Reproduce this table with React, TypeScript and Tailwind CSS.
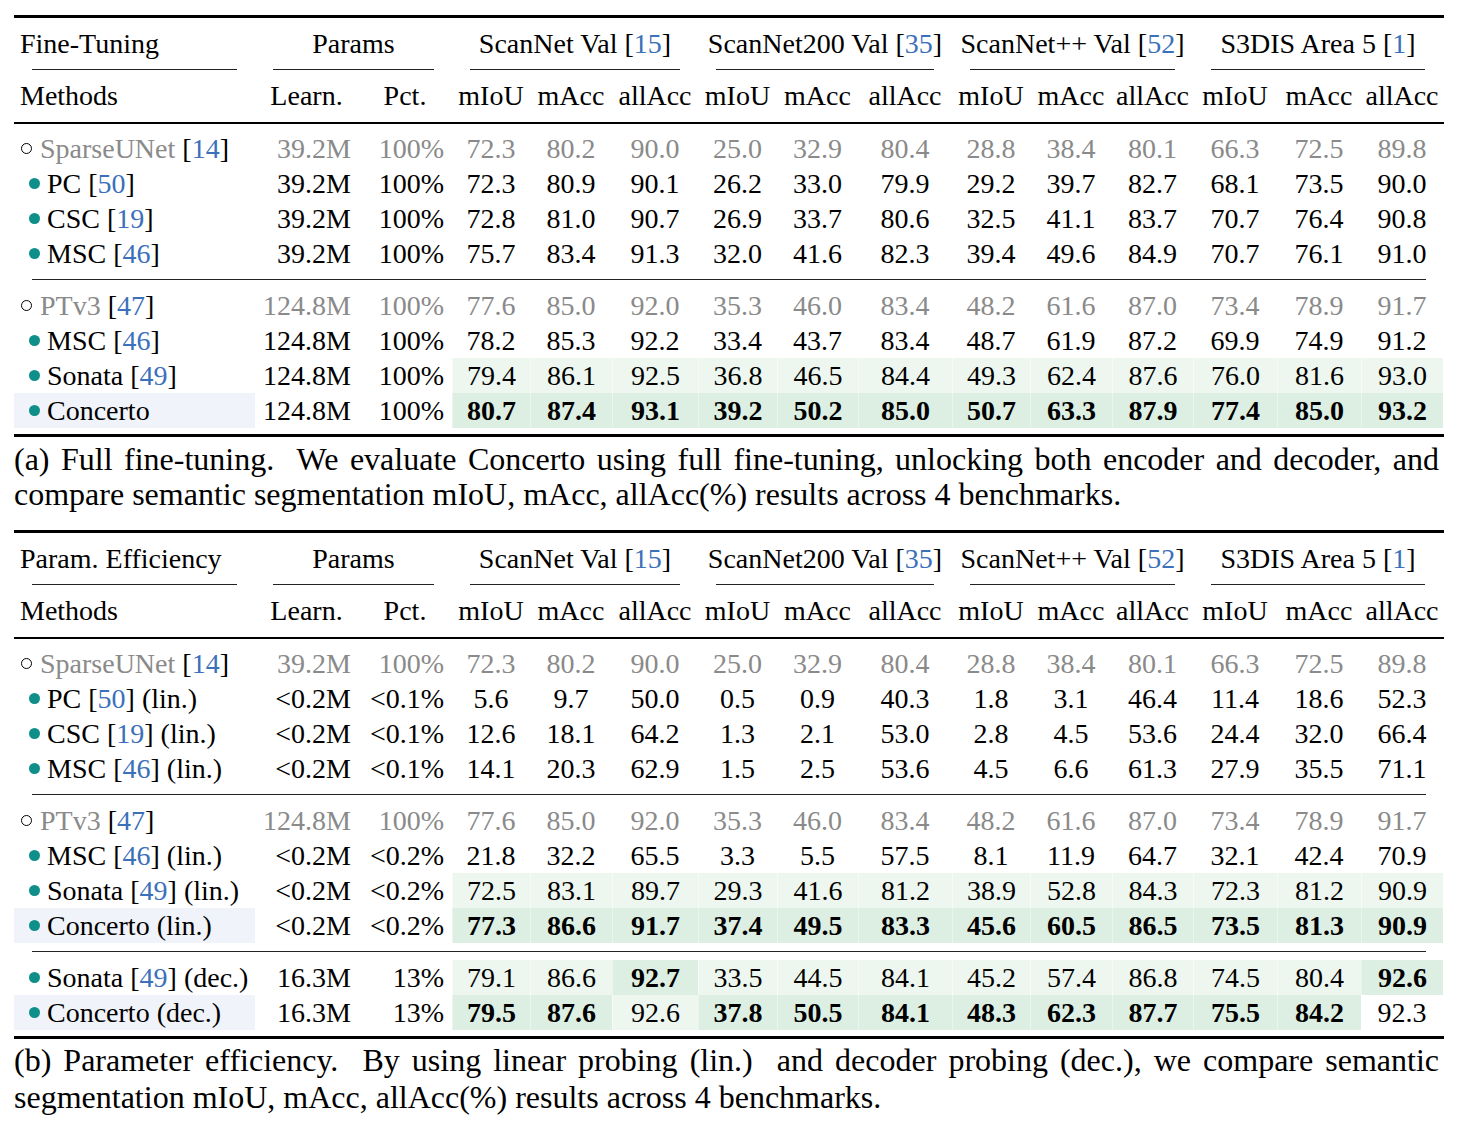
import React from 'react'

type Shade = '' | 'L' | 'D'

interface Row {
  mark: 'o' | 'dot'
  name: string
  cite?: string
  suffix?: string
  learn: string
  pct: string
  vals: string[]
  gray?: boolean
  bold?: number[]
  shade?: Shade[]
  label?: boolean
}

const GRID =
  'grid grid-cols-[241px_103px_94px_78px_82px_86px_79px_81px_94px_78px_82px_81px_84px_84px_82px]'

const GROUPS = [
  { name: 'ScanNet Val', cite: '15' },
  { name: 'ScanNet200 Val', cite: '35' },
  { name: 'ScanNet++ Val', cite: '52' },
  { name: 'S3DIS Area 5', cite: '1' },
]

const METRICS = ['mIoU', 'mAcc', 'allAcc']
const ALL = [0, 1, 2, 3, 4, 5, 6, 7, 8, 9, 10, 11]
const fill = (s: Shade): Shade[] => ALL.map(() => s)
const v = (s: string) => s.split(' ')

const BASE_SPARSE: Row = {
  mark: 'o', name: 'SparseUNet', cite: '14', learn: '39.2M', pct: '100%', gray: true,
  vals: v('72.3 80.2 90.0 25.0 32.9 80.4 28.8 38.4 80.1 66.3 72.5 89.8'),
}
const BASE_PTV3: Row = {
  mark: 'o', name: 'PTv3', cite: '47', learn: '124.8M', pct: '100%', gray: true,
  vals: v('77.6 85.0 92.0 35.3 46.0 83.4 48.2 61.6 87.0 73.4 78.9 91.7'),
}

const FINE: Row[][] = [
  [
    BASE_SPARSE,
    { mark: 'dot', name: 'PC', cite: '50', learn: '39.2M', pct: '100%', vals: v('72.3 80.9 90.1 26.2 33.0 79.9 29.2 39.7 82.7 68.1 73.5 90.0') },
    { mark: 'dot', name: 'CSC', cite: '19', learn: '39.2M', pct: '100%', vals: v('72.8 81.0 90.7 26.9 33.7 80.6 32.5 41.1 83.7 70.7 76.4 90.8') },
    { mark: 'dot', name: 'MSC', cite: '46', learn: '39.2M', pct: '100%', vals: v('75.7 83.4 91.3 32.0 41.6 82.3 39.4 49.6 84.9 70.7 76.1 91.0') },
  ],
  [
    BASE_PTV3,
    { mark: 'dot', name: 'MSC', cite: '46', learn: '124.8M', pct: '100%', vals: v('78.2 85.3 92.2 33.4 43.7 83.4 48.7 61.9 87.2 69.9 74.9 91.2') },
    { mark: 'dot', name: 'Sonata', cite: '49', learn: '124.8M', pct: '100%', shade: fill('L'), vals: v('79.4 86.1 92.5 36.8 46.5 84.4 49.3 62.4 87.6 76.0 81.6 93.0') },
    { mark: 'dot', name: 'Concerto', learn: '124.8M', pct: '100%', shade: fill('D'), bold: ALL, label: true, vals: v('80.7 87.4 93.1 39.2 50.2 85.0 50.7 63.3 87.9 77.4 85.0 93.2') },
  ],
]

const EFFI: Row[][] = [
  [
    BASE_SPARSE,
    { mark: 'dot', name: 'PC', cite: '50', suffix: '(lin.)', learn: '<0.2M', pct: '<0.1%', vals: v('5.6 9.7 50.0 0.5 0.9 40.3 1.8 3.1 46.4 11.4 18.6 52.3') },
    { mark: 'dot', name: 'CSC', cite: '19', suffix: '(lin.)', learn: '<0.2M', pct: '<0.1%', vals: v('12.6 18.1 64.2 1.3 2.1 53.0 2.8 4.5 53.6 24.4 32.0 66.4') },
    { mark: 'dot', name: 'MSC', cite: '46', suffix: '(lin.)', learn: '<0.2M', pct: '<0.1%', vals: v('14.1 20.3 62.9 1.5 2.5 53.6 4.5 6.6 61.3 27.9 35.5 71.1') },
  ],
  [
    BASE_PTV3,
    { mark: 'dot', name: 'MSC', cite: '46', suffix: '(lin.)', learn: '<0.2M', pct: '<0.2%', vals: v('21.8 32.2 65.5 3.3 5.5 57.5 8.1 11.9 64.7 32.1 42.4 70.9') },
    { mark: 'dot', name: 'Sonata', cite: '49', suffix: '(lin.)', learn: '<0.2M', pct: '<0.2%', shade: fill('L'), vals: v('72.5 83.1 89.7 29.3 41.6 81.2 38.9 52.8 84.3 72.3 81.2 90.9') },
    { mark: 'dot', name: 'Concerto (lin.)', learn: '<0.2M', pct: '<0.2%', shade: fill('D'), bold: ALL, label: true, vals: v('77.3 86.6 91.7 37.4 49.5 83.3 45.6 60.5 86.5 73.5 81.3 90.9') },
  ],
  [
    {
      mark: 'dot', name: 'Sonata', cite: '49', suffix: '(dec.)', learn: '16.3M', pct: '13%',
      shade: ['L', 'L', 'D', 'L', 'L', 'L', 'L', 'L', 'L', 'L', 'L', 'D'], bold: [2, 11],
      vals: v('79.1 86.6 92.7 33.5 44.5 84.1 45.2 57.4 86.8 74.5 80.4 92.6'),
    },
    {
      mark: 'dot', name: 'Concerto (dec.)', learn: '16.3M', pct: '13%', label: true,
      shade: ['D', 'D', 'L', 'D', 'D', 'D', 'D', 'D', 'D', 'D', 'D', ''], bold: [0, 1, 3, 4, 5, 6, 7, 8, 9, 10],
      vals: v('79.5 87.6 92.6 37.8 50.5 84.1 48.3 62.3 87.7 75.5 84.2 92.3'),
    },
  ],
]

function Cite({ children }: { children: React.ReactNode }) {
  return <span className="text-[#3b70bb]">{children}</span>
}

function Head({ title }: { title: string }) {
  return (
    <>
      <div className="h-[3px] bg-black" />
      <div className={`${GRID} h-[51px] items-center`}>
        <div className="pl-[6px] whitespace-nowrap">{title}</div>
        <div className="col-span-2 text-center">Params</div>
        {GROUPS.map(g => (
          <div key={g.name} className="col-span-3 text-center whitespace-nowrap">
            {g.name} [<Cite>{g.cite}</Cite>]
          </div>
        ))}
      </div>
      <div className={GRID}>
        <div className="mx-[18px] h-px bg-[#222]" />
        <div className="col-span-2 mx-[18px] h-px bg-[#222]" />
        {GROUPS.map(g => (
          <div key={g.name} className="col-span-3 mx-[18px] h-px bg-[#222]" />
        ))}
      </div>
      <div className={`${GRID} h-[52px] items-center`}>
        <div className="pl-[6px]">Methods</div>
        <div className="text-center">Learn.</div>
        <div className="text-center">Pct.</div>
        {GROUPS.flatMap(g => METRICS.map(m => (
          <div key={g.name + m} className="text-center">{m}</div>
        )))}
      </div>
      <div className="h-[2px] bg-black" />
    </>
  )
}

function BodyRow({ r }: { r: Row }) {
  const tone = r.gray ? 'text-[#8a8a8a]' : 'text-black'
  return (
    <div className={`${GRID} h-[35px]`}>
      <div className={`flex items-center whitespace-nowrap ${r.label ? 'bg-[#f0f4fa]' : ''} ${r.mark === 'o' ? 'pl-[7px]' : 'pl-[15px]'}`}>
        {r.mark === 'o' ? (
          <span className="mr-[8px] h-[11px] w-[11px] shrink-0 rounded-full border-[1.5px] border-black" />
        ) : (
          <span className="mr-[7px] h-[11px] w-[11px] shrink-0 rounded-full bg-[#0f8f8a]" />
        )}
        <span className={tone}>{r.name}</span>
        {r.cite && <span>&nbsp;[<Cite>{r.cite}</Cite>]</span>}
        {r.suffix && <span>&nbsp;{r.suffix}</span>}
      </div>
      <div className={`flex items-center justify-end pr-[7px] ${tone}`}>{r.learn}</div>
      <div className={`flex items-center justify-end pr-[8px] ${tone}`}>{r.pct}</div>
      {r.vals.map((val, i) => {
        const s = r.shade?.[i] ?? ''
        const bg = s === 'D' ? 'bg-[#dcefe2] border-l border-white/40' : s === 'L' ? 'bg-[#edf7ef] border-l border-white/50' : ''
        const b = r.bold?.includes(i) ? 'font-bold' : ''
        return (
          <div key={i} className={`flex items-center justify-center ${bg} ${b} ${tone}`}>
            {val}
          </div>
        )
      })}
    </div>
  )
}

function Table({ title, groups, seps }: { title: string; groups: Row[][]; seps: string[] }) {
  return (
    <div>
      <Head title={title} />
      <div className="h-[7px]" />
      {groups.map((g, gi) => (
        <div key={gi}>
          {gi > 0 && (
            <div className={seps[gi - 1]}>
              <div className="mx-[18px] h-px bg-[#222]" />
            </div>
          )}
          {g.map((r, ri) => <BodyRow key={ri} r={r} />)}
        </div>
      ))}
      <div className="h-[6px]" />
      <div className="h-[3px] bg-black" />
    </div>
  )
}

export default function App() {
  return (
    <div className="min-h-[1126px] w-[1464px] bg-white pt-[15px] font-['Liberation_Serif','Times_New_Roman',serif] text-[28px] leading-none text-black">
      <div className="ml-[14px] w-[1430px]">
        <Table title="Fine-Tuning" groups={FINE} seps={['pt-[8px] pb-[8px]']} />
        <div className="w-[1425px] pt-[5px] text-[32px] leading-[35px]">
          <div className="text-justify [text-align-last:justify]">
            (a) Full fine-tuning.&nbsp; We evaluate Concerto using full fine-tuning, unlocking both encoder and decoder, and
          </div>
          <div>compare semantic segmentation mIoU, mAcc, allAcc(%) results across 4 benchmarks.</div>
        </div>
        <div className="h-[18px]" />
        <Table title="Param. Efficiency" groups={EFFI} seps={['pt-[8px] pb-[8px]', 'pt-[8px] pb-[8px]']} />
        <div className="w-[1425px] pt-[3px] text-[32px] leading-[37px]">
          <div className="text-justify [text-align-last:justify]">
            (b) Parameter efficiency.&nbsp; By using linear probing (lin.)&nbsp; and decoder probing (dec.), we compare semantic
          </div>
          <div>segmentation mIoU, mAcc, allAcc(%) results across 4 benchmarks.</div>
        </div>
      </div>
    </div>
  )
}
